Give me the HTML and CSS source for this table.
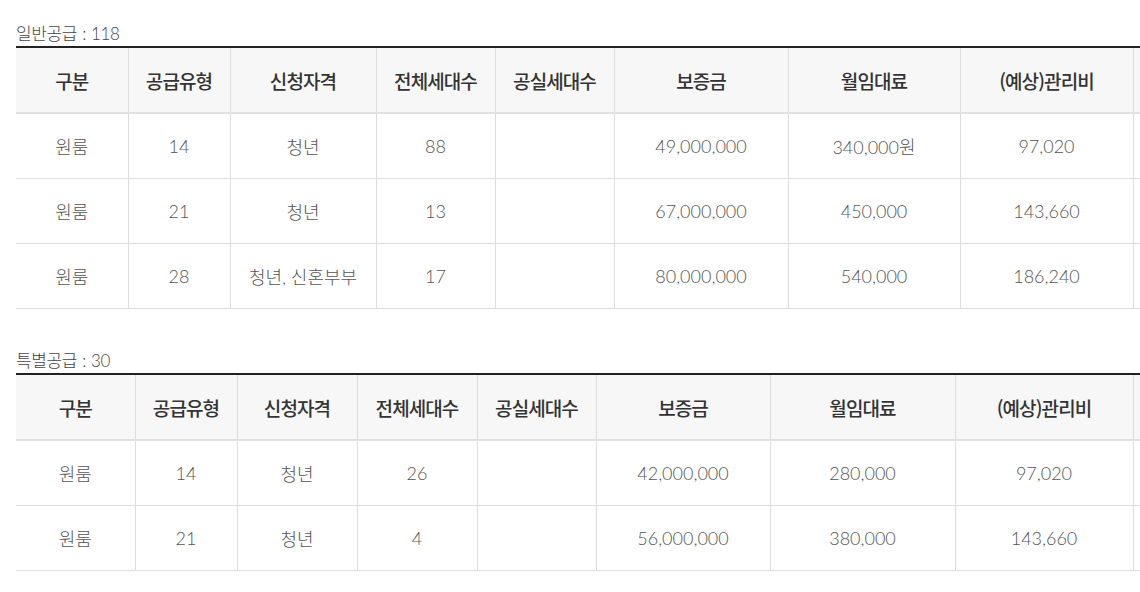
FILE: index.html
```html
<!DOCTYPE html>
<html lang="ko">
<head>
<meta charset="utf-8">
<link rel="stylesheet" href="styles.css">
</head>
<body>
<div class="page">
  <section class="block">
    <h3 class="title">일반공급 : 118</h3>
    <table class="tbl tbl-a">
      <colgroup>
        <col class="c1"><col class="c2"><col class="c3"><col class="c4"><col class="c5"><col class="c6"><col class="c7"><col class="c8"><col class="c9">
      </colgroup>
      <thead>
        <tr><th>구분</th><th>공급유형</th><th>신청자격</th><th>전체세대수</th><th>공실세대수</th><th>보증금</th><th>월임대료</th><th>(예상)관리비</th><th></th></tr>
      </thead>
      <tbody>
        <tr><td>원룸</td><td>14</td><td>청년</td><td>88</td><td></td><td>49,000,000</td><td>340,000원</td><td>97,020</td><td></td></tr>
        <tr><td>원룸</td><td>21</td><td>청년</td><td>13</td><td></td><td>67,000,000</td><td>450,000</td><td>143,660</td><td></td></tr>
        <tr><td>원룸</td><td>28</td><td>청년, 신혼부부</td><td>17</td><td></td><td>80,000,000</td><td>540,000</td><td>186,240</td><td></td></tr>
      </tbody>
    </table>
  </section>
  <section class="block block-2">
    <h3 class="title">특별공급 : 30</h3>
    <table class="tbl tbl-b">
      <colgroup>
        <col class="c1"><col class="c2"><col class="c3"><col class="c4"><col class="c5"><col class="c6"><col class="c7"><col class="c8"><col class="c9">
      </colgroup>
      <thead>
        <tr><th>구분</th><th>공급유형</th><th>신청자격</th><th>전체세대수</th><th>공실세대수</th><th>보증금</th><th>월임대료</th><th>(예상)관리비</th><th></th></tr>
      </thead>
      <tbody>
        <tr><td>원룸</td><td>14</td><td>청년</td><td>26</td><td></td><td>42,000,000</td><td>280,000</td><td>97,020</td><td></td></tr>
        <tr><td>원룸</td><td>21</td><td>청년</td><td>4</td><td></td><td>56,000,000</td><td>380,000</td><td>143,660</td><td></td></tr>
      </tbody>
    </table>
  </section>
</div>
</body>
</html>
```

FILE: styles.css
```css
html, body {
  margin: 0;
  padding: 0;
  background: #fff;
}

body {
  font-family: "Lato", "Noto Sans CJK KR", "Noto Sans", sans-serif;
  color: #555;
  overflow: hidden;
}

.page {
  padding: 22px 0 0 16px;
  width: 1124px;
  overflow: hidden;
}

.block-2 {
  margin-top: 40px;
}

.title {
  margin: 0;
  font-size: 17px;
  line-height: 24px;
  font-weight: 300;
  color: #444;
  letter-spacing: -0.4px;
  word-spacing: 1px;
}

.tbl {
  border-collapse: collapse;
  table-layout: fixed;
  border-top: 2px solid #222;
}

.tbl-a { width: 1217px; }
.tbl-b { width: 1217px; }

.tbl th,
.tbl td {
  text-align: center;
  padding: 0;
  border-left: 1px solid #ddd;
}

.tbl th:first-child,
.tbl td:first-child {
  border-left: 0;
}

.tbl th {
  height: 64px;
  background: #f7f7f7;
  color: #333;
  font-family: "Noto Sans CJK KR", "Noto Sans", sans-serif;
  font-size: 19px;
  font-weight: 500;
  border-bottom: 2px solid #e2e2e2;
  letter-spacing: -0.9px;
}

.tbl td {
  height: 64px;
  font-size: 18px;
  font-weight: 300;
  color: #555;
  border-bottom: 1px solid #ddd;
  letter-spacing: 0;
}

.tbl-a .c1 { width: 112px; }
.tbl-a .c2 { width: 102px; }
.tbl-a .c3 { width: 146px; }
.tbl-a .c4 { width: 119px; }
.tbl-a .c5 { width: 119px; }
.tbl-a .c6 { width: 174px; }
.tbl-a .c7 { width: 172px; }
.tbl-a .c8 { width: 173px; }
.tbl-a .c9 { width: 100px; }

.tbl-b .c1 { width: 119px; }
.tbl-b .c2 { width: 102px; }
.tbl-b .c3 { width: 120px; }
.tbl-b .c4 { width: 120px; }
.tbl-b .c5 { width: 119px; }
.tbl-b .c6 { width: 174px; }
.tbl-b .c7 { width: 185px; }
.tbl-b .c8 { width: 178px; }
.tbl-b .c9 { width: 100px; }
```
